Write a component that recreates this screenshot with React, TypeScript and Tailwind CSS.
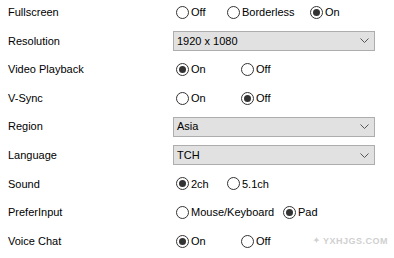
import React from "react";

type Opt = { label: string; w?: string; checked?: boolean };

function Radio({ label, w, checked }: Opt) {
    return (
        <label className={`flex items-center gap-[2px] ${w ?? ""}`}>
            <span className="flex h-[13px] w-[13px] items-center justify-center rounded-full border border-[#333] bg-white">
                {checked && <span className="h-[7px] w-[7px] rounded-full bg-[#333]" />}
            </span>
            <span>{label}</span>
        </label>
    );
}

function Select({ value }: { value: string }) {
    return (
        <div className="flex h-[20px] w-[202px] items-center justify-between border border-[#adadad] bg-[#e1e1e1] pl-[3px] pr-[4px]">
            <span>{value}</span>
            <svg width="9" height="5" viewBox="0 0 9 5" className="mr-[1px]">
                <path d="M0.5 0.5 L4.5 4.5 L8.5 0.5" fill="none" stroke="#555" strokeWidth="1" />
            </svg>
        </div>
    );
}

const rows: { name: string; radios?: Opt[]; select?: string }[] = [
    { name: "Fullscreen", radios: [{ label: "Off", w: "w-[51px]" }, { label: "Borderless", w: "w-[83px]" }, { label: "On", checked: true }] },
    { name: "Resolution", select: "1920 x 1080" },
    { name: "Video Playback", radios: [{ label: "On", w: "w-[65px]", checked: true }, { label: "Off" }] },
    { name: "V-Sync", radios: [{ label: "On", w: "w-[65px]" }, { label: "Off", checked: true }] },
    { name: "Region", select: "Asia" },
    { name: "Language", select: "TCH" },
    { name: "Sound", radios: [{ label: "2ch", w: "w-[51px]", checked: true }, { label: "5.1ch" }] },
    { name: "PreferInput", radios: [{ label: "Mouse/Keyboard", w: "w-[107px]" }, { label: "Pad", checked: true }] },
    { name: "Voice Chat", radios: [{ label: "On", w: "w-[65px]", checked: true }, { label: "Off" }] },
];

export default function App() {
    return (
        <div className="relative h-[258px] w-[394px] overflow-hidden bg-white text-[11px] text-black" style={{ fontFamily: '"Liberation Sans", Arial, sans-serif' }}>
            <div className="mt-[-2px] flex flex-col">
                {rows.map((row) => (
                    <div key={row.name} className="flex h-[28.6px] items-center">
                        <div className="w-[173px] pl-[8px]">{row.name}</div>
                        {row.select ? (
                            <Select value={row.select} />
                        ) : (
                            <div className="flex items-center pl-[3px]">
                                {row.radios!.map((r) => (
                                    <Radio key={r.label} {...r} />
                                ))}
                            </div>
                        )}
                    </div>
                ))}
            </div>

            {/* watermark */}
            <div className="absolute bottom-[10px] right-[6px] flex items-center gap-[2px] text-[9px] font-bold tracking-[0.5px] text-[#d0d0d0]">
                <span className="text-[8px]">✦</span>
                <span>YXHJGS.COM</span>
            </div>
        </div>
    );
}
